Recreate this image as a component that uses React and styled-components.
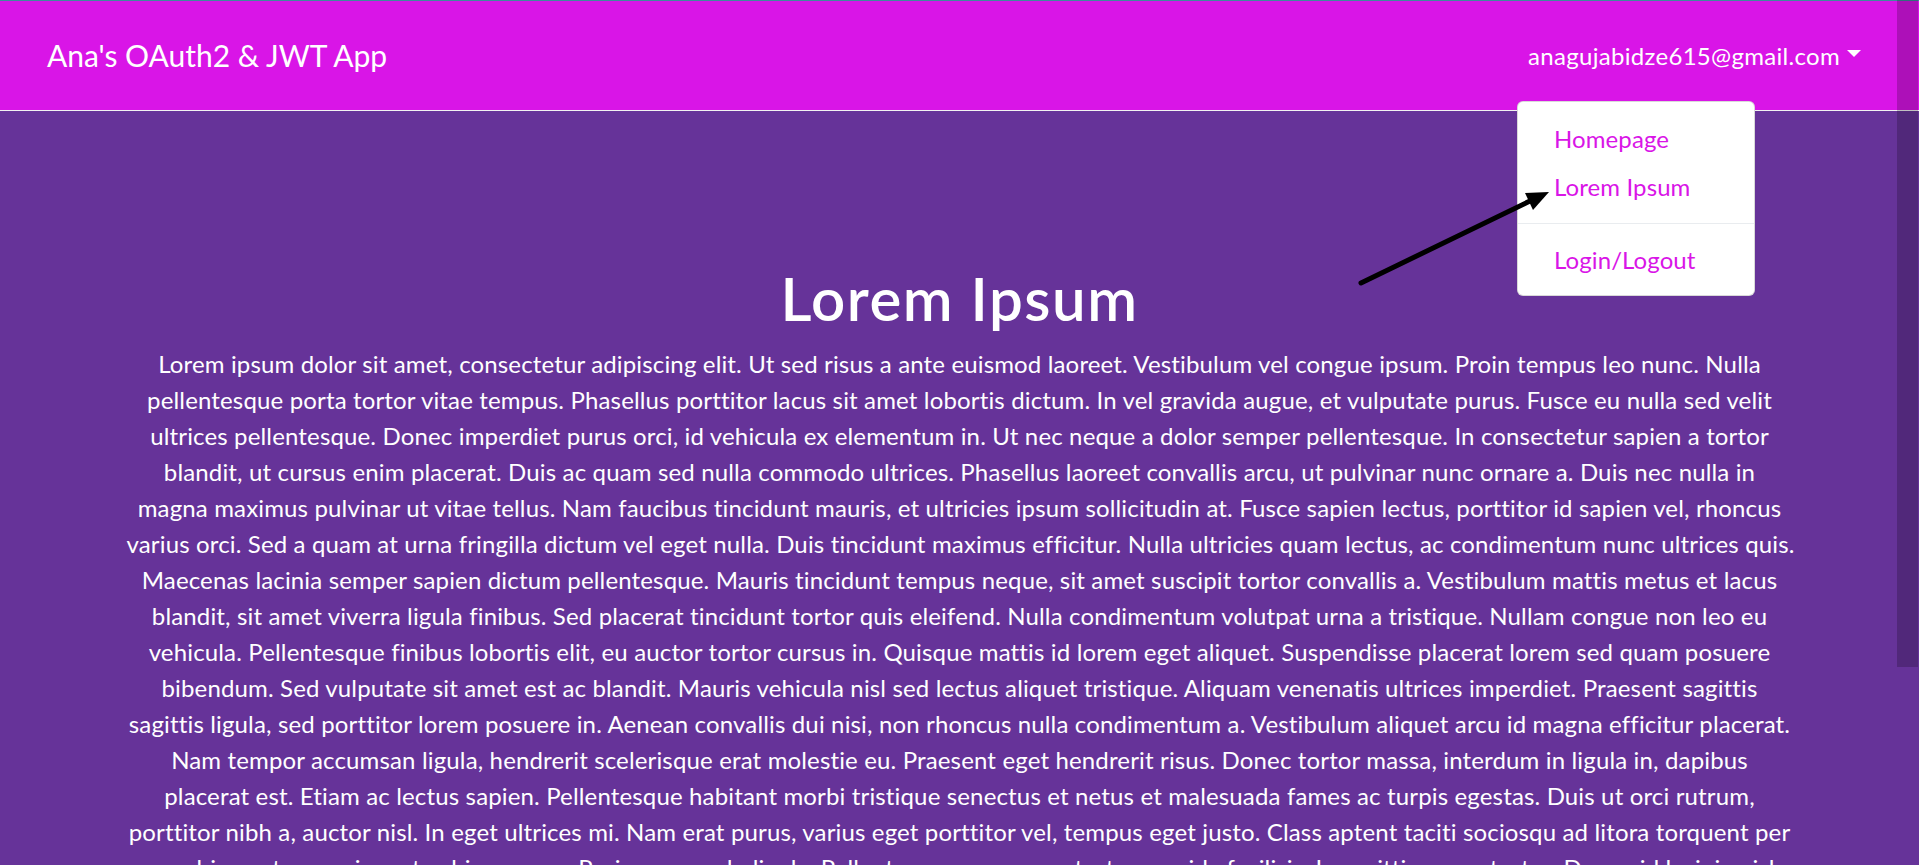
import React from "react";
import styled, { createGlobalStyle } from "styled-components";

const Global = createGlobalStyle`
  html, body {
    margin: 0;
    padding: 0;
    height: 100%;
    overflow: hidden;
    background: #663399;
  }
  body {
    font-family: Lato, "Open Sans", sans-serif;
    color: #ffffff;
  }
  * { box-sizing: border-box; }
`;

const Page = styled.div`
  min-height: 100vh;
  background: #663399;
  position: relative;
`;

const Navbar = styled.nav`
  position: relative;
  height: 111px;
  background: #d915e7;
  border-top: 1px solid #3f8a9c;
  border-bottom: 1px solid #f2f2f2;
  display: flex;
  align-items: center;
  justify-content: space-between;
  padding: 0 46px 0 47px;
`;

const Brand = styled.a`
  font-size: 30px;
  line-height: 45px;
  color: #ffffff;
  text-decoration: none;
  font-weight: 400;
`;

const NavItem = styled.div`
  display: flex;
  align-items: center;
`;

const NavLink = styled.a`
  display: flex;
  align-items: center;
  padding: 12px 12px;
  font-size: 24px;
  line-height: 36px;
  letter-spacing: 0.3px;
  color: #ffffff;
  text-decoration: none;
`;

const Caret = styled.span`
  display: inline-block;
  margin-left: 7px;
  margin-top: -4px;
  border-top: 7px solid #ffffff;
  border-left: 7px solid transparent;
  border-right: 7px solid transparent;
`;

const Menu = styled.div`
  position: absolute;
  top: 100px;
  right: 164px;
  width: 238px;
  padding: 13px 0 11px;
  background: #ffffff;
  border: 1px solid rgba(0, 0, 0, 0.15);
  border-radius: 6px;
  z-index: 5;
`;

const MenuItem = styled.a`
  display: block;
  padding: 6px 36px;
  font-size: 24px;
  line-height: 36px;
  letter-spacing: 0.1px;
  color: #d915e7;
  text-decoration: none;
`;

const Divider = styled.div`
  height: 0;
  margin: 12px 0;
  border-top: 1px solid #e9ecef;
`;

const Container = styled.main`
  max-width: 1710px;
  margin: 0 auto;
  padding: 151px 22px 0;
  text-align: center;
`;

const Title = styled.h1`
  margin: 0 0 12px;
  font-size: 60px;
  line-height: 72px;
  font-weight: 600;
  letter-spacing: 1.5px;
  color: #ffffff;
`;

const Text = styled.p`
  margin: 0;
  font-size: 24px;
  line-height: 36px;
  letter-spacing: 0.15px;
  white-space: nowrap;
  color: #ffffff;
`;

const Thumb = styled.div`
  position: fixed;
  top: 0;
  right: 1px;
  width: 21px;
  height: 667px;
  background: rgba(0, 0, 0, 0.2);
  z-index: 10;
`;

const Annotation = styled.svg`
  position: absolute;
  left: 0;
  top: 0;
  width: 1919px;
  height: 865px;
  pointer-events: none;
  z-index: 20;
`;

const lines = [
  "Lorem ipsum dolor sit amet, consectetur adipiscing elit. Ut sed risus a ante euismod laoreet. Vestibulum vel congue ipsum. Proin tempus leo nunc. Nulla",
  "pellentesque porta tortor vitae tempus. Phasellus porttitor lacus sit amet lobortis dictum. In vel gravida augue, et vulputate purus. Fusce eu nulla sed velit",
  "ultrices pellentesque. Donec imperdiet purus orci, id vehicula ex elementum in. Ut nec neque a dolor semper pellentesque. In consectetur sapien a tortor",
  "blandit, ut cursus enim placerat. Duis ac quam sed nulla commodo ultrices. Phasellus laoreet convallis arcu, ut pulvinar nunc ornare a. Duis nec nulla in",
  "magna maximus pulvinar ut vitae tellus. Nam faucibus tincidunt mauris, et ultricies ipsum sollicitudin at. Fusce sapien lectus, porttitor id sapien vel, rhoncus",
  "varius orci. Sed a quam at urna fringilla dictum vel eget nulla. Duis tincidunt maximus efficitur. Nulla ultricies quam lectus, ac condimentum nunc ultrices quis.",
  "Maecenas lacinia semper sapien dictum pellentesque. Mauris tincidunt tempus neque, sit amet suscipit tortor convallis a. Vestibulum mattis metus et lacus",
  "blandit, sit amet viverra ligula finibus. Sed placerat tincidunt tortor quis eleifend. Nulla condimentum volutpat urna a tristique. Nullam congue non leo eu",
  "vehicula. Pellentesque finibus lobortis elit, eu auctor tortor cursus in. Quisque mattis id lorem eget aliquet. Suspendisse placerat lorem sed quam posuere",
  "bibendum. Sed vulputate sit amet est ac blandit. Mauris vehicula nisl sed lectus aliquet tristique. Aliquam venenatis ultrices imperdiet. Praesent sagittis",
  "sagittis ligula, sed porttitor lorem posuere in. Aenean convallis dui nisi, non rhoncus nulla condimentum a. Vestibulum aliquet arcu id magna efficitur placerat.",
  "Nam tempor accumsan ligula, hendrerit scelerisque erat molestie eu. Praesent eget hendrerit risus. Donec tortor massa, interdum in ligula in, dapibus",
  "placerat est. Etiam ac lectus sapien. Pellentesque habitant morbi tristique senectus et netus et malesuada fames ac turpis egestas. Duis ut orci rutrum,",
  "porttitor nibh a, auctor nisl. In eget ultrices mi. Nam erat purus, varius eget porttitor vel, tempus eget justo. Class aptent taciti sociosqu ad litora torquent per",
  "conubia nostra, per inceptos himenaeos. Proin commodo ligula. Pellentesque accumsan tortor gravida facilisis. In sagittis purus tortor. Donec id lacinia nisl",
];

export default function App() {
  return (
    <Page>
      <Global />
      <Navbar>
        <Brand href="#">Ana's OAuth2 &amp; JWT App</Brand>
        <NavItem>
          <NavLink href="#">
            anagujabidze615@gmail.com
            <Caret />
          </NavLink>
        </NavItem>
        <Menu>
          <MenuItem href="#">Homepage</MenuItem>
          <MenuItem href="#">Lorem Ipsum</MenuItem>
          <Divider />
          <MenuItem href="#">Login/Logout</MenuItem>
        </Menu>
      </Navbar>
      <Container>
        <Title>Lorem Ipsum</Title>
        <Text>
          {lines.map((l, i) => (
            <React.Fragment key={i}>
              {l}
              {i < lines.length - 1 && <br />}
            </React.Fragment>
          ))}
        </Text>
      </Container>
      <Annotation viewBox="0 0 1919 865">
        <line
          x1="1361"
          y1="283"
          x2="1532"
          y2="200"
          stroke="#000"
          strokeWidth="5"
          strokeLinecap="round"
        />
        <polygon points="1549,192 1533,210 1525,193" fill="#000" />
      </Annotation>
      <Thumb />
    </Page>
  );
}
